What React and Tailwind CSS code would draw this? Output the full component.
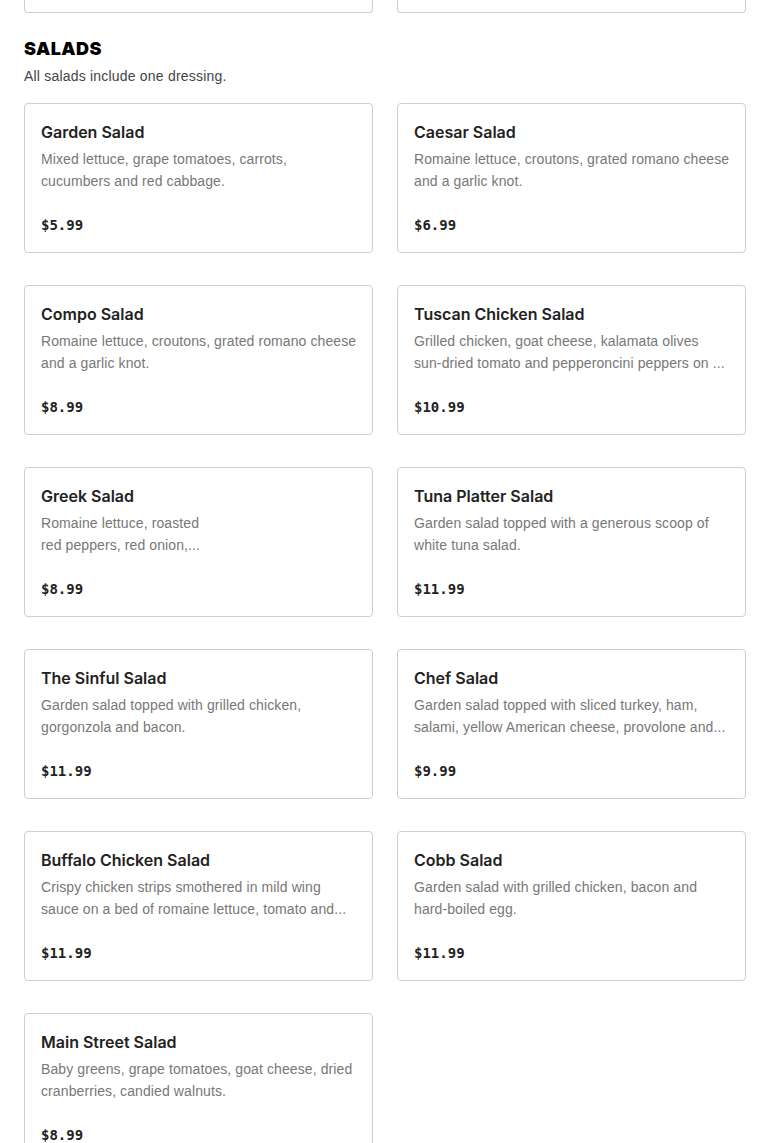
const salads = [
  { name: 'Garden Salad', desc: ['Mixed lettuce, grape tomatoes, carrots,', 'cucumbers and red cabbage.'], price: '$5.99' },
  { name: 'Caesar Salad', desc: ['Romaine lettuce, croutons, grated romano cheese', 'and a garlic knot.'], price: '$6.99' },
  { name: 'Compo Salad', desc: ['Romaine lettuce, croutons, grated romano cheese', 'and a garlic knot.'], price: '$8.99' },
  { name: 'Tuscan Chicken Salad', desc: ['Grilled chicken, goat cheese, kalamata olives', 'sun-dried tomato and pepperoncini peppers on ...'], price: '$10.99' },
  { name: 'Greek Salad', desc: ['Romaine lettuce, roasted', 'red peppers, red onion,...'], price: '$8.99' },
  { name: 'Tuna Platter Salad', desc: ['Garden salad topped with a generous scoop of', 'white tuna salad.'], price: '$11.99' },
  { name: 'The Sinful Salad', desc: ['Garden salad topped with grilled chicken,', 'gorgonzola and bacon.'], price: '$11.99' },
  { name: 'Chef Salad', desc: ['Garden salad topped with sliced turkey, ham,', 'salami, yellow American cheese, provolone and...'], price: '$9.99' },
  { name: 'Buffalo Chicken Salad', desc: ['Crispy chicken strips smothered in mild wing', 'sauce on a bed of romaine lettuce, tomato and...'], price: '$11.99' },
  { name: 'Cobb Salad', desc: ['Garden salad with grilled chicken, bacon and', 'hard-boiled egg.'], price: '$11.99' },
  { name: 'Main Street Salad', desc: ['Baby greens, grape tomatoes, goat cheese, dried', 'cranberries, candied walnuts.'], price: '$8.99' },
];

const MenuCard = ({ item }) => (
  <div className="h-[150px] border border-[#cfcfcf] rounded-[4px] bg-white pl-4 pr-3 pt-4 flex flex-col">
    <h3 className="text-[16px] leading-6 font-semibold text-[#222]">{item.name}</h3>
    <p className="mt-[4px] text-[14px] leading-[22px] tracking-[0.1px] text-[#777] h-[44px] whitespace-nowrap font-['Liberation_Sans',sans-serif]">
      {item.desc[0]}
      <br />
      {item.desc[1]}
    </p>
    <span className="mt-[23px] text-[14px] leading-5 font-bold text-[#222] font-['DejaVu_Sans_Mono',monospace]">
      {item.price}
    </span>
  </div>
);

export default function App() {
  return (
    <div className="bg-white min-h-screen px-6 font-['Inter',sans-serif]">
      {/* tail of the previous section */}
      <div className="grid grid-cols-2 gap-6">
        <div className="h-[13px] border-x border-b border-[#cfcfcf] rounded-b-[4px]" />
        <div className="h-[13px] border-x border-b border-[#cfcfcf] rounded-b-[4px]" />
      </div>

      <section className="pt-[24px]">
        <h2 className="text-[18px] leading-6 font-black tracking-wide text-black">SALADS</h2>
        <p className="mt-[5px] text-[14px] leading-5 tracking-[0.2px] text-[#444] font-['Liberation_Sans',sans-serif]">
          All salads include one dressing.
        </p>
        <div className="mt-[17px] grid grid-cols-2 gap-x-6 gap-y-8">
          {salads.map((item) => (
            <MenuCard key={item.name} item={item} />
          ))}
        </div>
      </section>
    </div>
  );
}
